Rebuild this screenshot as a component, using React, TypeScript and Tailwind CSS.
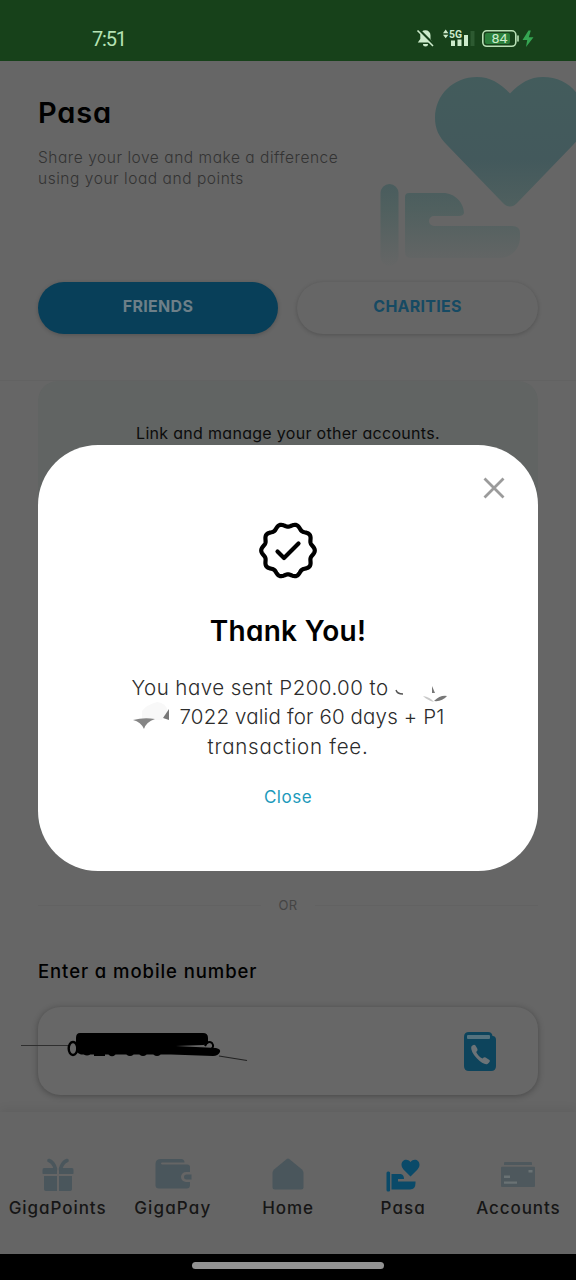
import React from "react";

function StatusBar() {
  return (
    <div className="h-[61px] bg-[#17411a] flex justify-between pl-[92px] pr-[40px]">
      <span className="mt-[27px] text-[20px] leading-[24px] tracking-[-1.2px] text-[#b5e2b4] font-['Roboto',sans-serif]">
        7:51
      </span>
      <svg width="120" height="24" viewBox="0 0 120 24" className="mt-[27px]">
        <path
          d="M9.5 3.2a5 5 0 0 1 5 5v4l2.2 3.3H1.8L4.3 12V8.2a5 5 0 0 1 5.2-5zM7 17h5a2.5 2.5 0 0 1-5 0z"
          fill="#cdebcb"
        />
        <path d="M2.5 2.5l16 16" stroke="#17411a" strokeWidth="3" />
        <path d="M1.5 3.5l15.5 15.5" stroke="#cdebcb" strokeWidth="1.6" />
        <path d="M27 6.2l2.7-3.6 2.7 3.6zM27 7.8l2.7 3.4 2.7-3.4z" fill="#cdebcb" />
        <text
          x="33"
          y="10.6"
          fontSize="11.5"
          fontWeight="700"
          textLength="13"
          lengthAdjust="spacingAndGlyphs"
          fontFamily="Roboto, sans-serif"
          fill="#cdebcb"
        >
          5G
        </text>
        <path d="M35 13.5h4v5.5h-4zM41.5 12.5h4v6.5h-4zM48 8h4v11h-4z" fill="#cdebcb" />
        <path d="M54.5 4h4v15h-4z" fill="#2d5a31" />
        <rect x="66.8" y="3.8" width="33" height="15.5" rx="4" fill="none" stroke="#b9dfb6" strokeWidth="1.6" />
        <rect x="69" y="6" width="25" height="11" rx="2" fill="#2b7f3b" />
        <path d="M102 9v5" stroke="#b9dfb6" strokeWidth="1.6" strokeLinecap="round" />
        <text
          x="75.5"
          y="16"
          fontSize="13"
          textLength="16"
          lengthAdjust="spacingAndGlyphs"
          fontFamily="Roboto, sans-serif"
          fill="#cdebcb"
        >
          84
        </text>
        <path d="M112.5 3.5l-6 9.5h4.7l-1.2 7 7.5-9.7h-4.7l2-6.8z" fill="#35a552" />
      </svg>
    </div>
  );
}

function HeartHand() {
  return (
    <svg width="206" height="200" viewBox="0 0 206 200" className="absolute right-0 top-[9px]">
      <defs>
        <linearGradient id="fade" gradientUnits="userSpaceOnUse" x1="0" y1="0" x2="0" y2="198">
          <stop offset="0" stopColor="#435c5c" />
          <stop offset="0.45" stopColor="#43595c" />
          <stop offset="0.7" stopColor="#50605f" />
          <stop offset="1" stopColor="#666666" />
        </linearGradient>
      </defs>
      <path
        fill="url(#fade)"
        d="M140 23.5C130 13 120 7 107 7C83 7 65 25 65 48C65 59 69 67 77 75L132 132Q140 141 148 132L203 75C211 67 215 59 215 48C215 25 197 7 173 7C160 7 150 13 140 23.5Z"
      />
      <rect x="10.5" y="114" width="18" height="82" rx="9" fill="url(#fade)" />
      <path
        fill="url(#fade)"
        d="M39 123H73C85 123 94 133 94 143Q93 146 89 146H64A5 5 0 0 0 64 156H142Q150 156 150 163V167C150 179 141 188 130 188H41Q35 188 35 182V127Q35 123 39 123Z"
      />
    </svg>
  );
}

function ContactBookIcon() {
  return (
    <svg width="32" height="39" viewBox="0 0 32 39">
      <path d="M5 0H24Q28 0 28.5 4Q32 4 32 8V34Q32 39 27 39H5Q0 39 0 34V5Q0 0 5 0Z" fill="#0d445c" />
      <rect x="3" y="3" width="23" height="4" rx="1" fill="#54727e" />
      <path
        d="M7.2 14.7Q9.8 11.5 11.5 13.5L13.5 17Q14 18.5 12.2 20Q14.5 24.8 18.5 26.6Q20.2 24.6 21.6 25.4L25.5 28Q26.8 29.5 23.5 32Q19.5 33.2 13 26.5T7.2 14.7Z"
        fill="#6c7377"
      />
    </svg>
  );
}

// crossed-out number inside the input
function Scribble() {
  return (
    <svg width="230" height="40" viewBox="0 0 230 40" className="absolute left-[-17px] top-[18px]">
      <path d="M0 20.5H48" stroke="#2f2f2f" strokeWidth="1" />
      <path d="M198 31L226 35.5" stroke="#222" strokeWidth="1.2" />
      <ellipse cx="52" cy="23.5" rx="4.3" ry="6.5" fill="none" stroke="#000" strokeWidth="2.4" />
      <path d="M184 21Q187 15 191 18Q194 22 189 25" fill="none" stroke="#000" strokeWidth="2" />
      <path
        d="M59 8H182Q187 8 187 13V17Q187 20 182 20L155 21L195 23Q200 24 199 27Q197 31 192 31L150 29.5H60Q55 28 55 24V13Q55 8 59 8Z"
        fill="#000"
      />
      <g fill="#000">
        <circle cx="66" cy="27" r="3.6" />
        <rect x="73" y="26" width="11" height="5" />
        <circle cx="91" cy="27" r="4.2" />
        <circle cx="109" cy="27" r="4" />
        <circle cx="122" cy="27" r="4" />
        <circle cx="136" cy="27" r="4" />
      </g>
    </svg>
  );
}

const navItems: { label: string; className: string; icon: React.ReactNode }[] = [
  {
    label: "GigaPoints",
    className: "tracking-[0.95px]",
    icon: (
      <g fill="#4a565c">
        <path d="M2 10H15V16H1Q.5 16 .5 15V12Q.5 10 2 10ZM17 10H30Q31.5 10 31.5 12V15Q31.5 16 31 16H17ZM2 18H15V33H4Q2 33 2 31ZM17 18H30V31Q30 33 28 33H17Z" />
        <path d="M7 2.5Q11.5 4 13.5 11M25 2.5Q20.5 4 18.5 11" fill="none" stroke="#4a565c" strokeWidth="3.6" strokeLinecap="round" />
      </g>
    ),
  },
  {
    label: "GigaPay",
    className: "tracking-[1.15px]",
    icon: (
      <g fill="#4a565c">
        <path d="M4 1H24Q27.5 1 27.5 4.5H5Q4 4.5 4 5.3T5 6.5H30Q33 6.5 33 9V14H29A5 5 0 0 0 29 24H33V27Q33 30.5 29.5 30.5H2Q-1.5 30.5-1.5 27V6Q-1.5 1 4 1Z" />
        <path d="M29.5 16.5H34.5V21.5H29.5A2.5 2.5 0 0 1 29.5 16.5Z" />
      </g>
    ),
  },
  {
    label: "Home",
    className: "tracking-[0.9px]",
    icon: (
      <path d="M14.5 1.2Q16 0 17.5 1.2L30 11.5Q31.5 13 31.5 15V29Q31.5 31.5 29 31.5H3Q.5 31.5.5 29V15Q.5 13 2 11.5Z" fill="#4a565c" />
    ),
  },
  {
    label: "Pasa",
    className: "tracking-[1.1px]",
    icon: (
      <g fill="#0a4a69">
        <path d="M23.5 4C20 0 14.5 2 14.5 7Q14.5 9.5 16.5 11.5L23.5 18.5L30.5 11.5Q32.5 9.5 32.5 7C32.5 2 27 0 23.5 4Z" />
        <rect x="-.5" y="13.5" width="3.6" height="20" rx="1.5" />
        <path d="M4.5 16H13.5Q17 16.5 17 21H11V23.5H28.5V25Q28.5 31.5 23 31.5H4.5Z" />
      </g>
    ),
  },
  {
    label: "Accounts",
    className: "tracking-[0.9px]",
    icon: (
      <g>
        <path d="M3 4H29Q30 4 30 5V7H2V5Q2 4 3 4ZM0 8.8H32Q33 8.8 33 10V28Q33 29 32 29H0Q-1 29-1 28V10Q-1 8.8 0 8.8Z" fill="#4e585d" />
        <path d="M2 17.5H8V20H2ZM2 23.5H15V25.8H2ZM26.5 12H30.5V14.5H26.5Z" fill="#6a7274" />
      </g>
    ),
  },
];

function BottomNav() {
  return (
    <nav className="h-[142px] grid grid-cols-5 pt-[44px] bg-[#656565] shadow-[0_-2px_10px_rgba(0,0,0,0.08)]">
      {navItems.map((item) => (
        <div key={item.label} className="flex flex-col items-center">
          <svg width="32" height="36" viewBox="0 0 32 36" className="overflow-visible mt-[2px]">
            {item.icon}
          </svg>
          <span className={`mt-[2px] text-[17px] leading-[24px] font-medium text-[#161616] whitespace-nowrap ${item.className}`}>
            {item.label}
          </span>
        </div>
      ))}
    </nav>
  );
}

function SealCheck() {
  const points: string[] = [];
  for (let i = 0; i <= 144; i++) {
    const angle = (i / 144) * Math.PI * 2;
    const r = 25.3 + 1.5 * Math.cos(10 * angle);
    points.push(`${(30 + r * Math.cos(angle)).toFixed(2)},${(30.5 + r * Math.sin(angle)).toFixed(2)}`);
  }
  return (
    <svg width="60" height="60" viewBox="0 0 60 60" className="mt-[75px]">
      <polygon points={points.join(" ")} fill="none" stroke="#000" strokeWidth="4.2" strokeLinejoin="round" />
      <path d="M19.5 31.5L26 38L40.5 23.5" fill="none" stroke="#000" strokeWidth="4.2" strokeLinecap="round" strokeLinejoin="round" />
    </svg>
  );
}

function ThankYouModal() {
  return (
    <div className="absolute left-[38px] top-[445px] w-[500px] h-[426px] rounded-[60px] bg-white flex flex-col items-center">
      <svg width="22" height="22" viewBox="0 0 22 22" className="absolute right-[33px] top-[32px]">
        <path d="M1.5 1.5L20.5 20.5M20.5 1.5L1.5 20.5" stroke="#9b9b9b" strokeWidth="2.8" />
      </svg>
      <SealCheck />
      <h2 className="mt-[35px] text-[28px] leading-[32px] font-semibold tracking-[0.3px] text-black">Thank You!</h2>
      <div className="relative mt-[26px] w-[313px] text-[20.5px] leading-[29.3px] font-light text-[#2c2c2c] whitespace-nowrap">
        <p className="tracking-[0.45px]">You have sent P200.00 to</p>
        <p className="text-right tracking-[0.15px]">7022 valid for 60 days + P1</p>
        <p className="text-center tracking-[0.75px]">transaction fee.</p>
        <svg width="330" height="60" viewBox="0 0 330 60" className="absolute left-0 top-0">
          <path d="M264 17Q265 21 271 21" fill="none" stroke="#555" strokeWidth="1.4" />
          <path d="M300 13L303 20H300Z" fill="#777" />
          <path d="M291 23Q298 24 302 29Q295 27 291 23Z" fill="#c9c9c9" />
          <path d="M302 28Q308 22 315 23Q310 29 302 28Z" fill="#777" />
          <path d="M10 38Q14 32 25 29Q34 30 36 38L30 47H10Z" fill="#f8f8f8" />
          <path d="M1 47Q12 44 23 46Q14 49 12 56Q9 49 1 47Z" fill="#858585" />
          <path d="M37 36V47L31 45Z" fill="#777" />
        </svg>
      </div>
      <button className="mt-[24px] text-[17px] leading-[24px] tracking-[0.5px] text-[#1c9abb]">Close</button>
    </div>
  );
}

export default function App() {
  return (
    <div className="relative w-[576px] h-[1280px] overflow-hidden bg-[#666666] flex flex-col font-['Inter',sans-serif] [font-feature-settings:'cv11']">
      <StatusBar />
      <header className="relative h-[320px] px-[38px] border-b border-[#626262]">
        <HeartHand />
        <h1 className="pt-[34px] text-[29px] leading-[36px] font-semibold tracking-[0.8px] text-black">Pasa</h1>
        <p className="mt-[16px] text-[15.5px] leading-[21.3px] font-light tracking-[0.54px] text-[#333333] whitespace-nowrap">
          Share your love and make a difference
          <br />
          using your load and points
        </p>
        <div className="mt-[92px] flex gap-[19px]">
          <button className="w-[240px] h-[52px] pb-[3px] rounded-full bg-[#083f59] text-[#6d7f88] text-[16px] font-bold tracking-[0.3px] shadow-[0_1px_4px_rgba(0,0,0,0.2)]">
            FRIENDS
          </button>
          <button className="w-[241px] h-[52px] pb-[3px] rounded-full bg-[#666666] text-[#164a63] text-[16px] font-bold tracking-[0.25px] shadow-[0_1px_4px_rgba(0,0,0,0.2)]">
            CHARITIES
          </button>
        </div>
      </header>
      <main className="h-[731px] px-[38px]">
        <div className="h-[460px] rounded-[20px] bg-[#616463] pt-[40px] text-center text-[16px] leading-[24px] tracking-[0.3px] text-[#0c0c0c]">
          Link and manage your other accounts.
        </div>
        <div className="mt-[54px] flex items-center gap-[18px] text-[13px] leading-[20px] tracking-[0.3px] text-[#444444]">
          <span className="h-px flex-1 bg-[#626262]" />
          OR
          <span className="h-px flex-1 bg-[#626262]" />
        </div>
        <h3 className="mt-[44px] text-[18.5px] leading-[24px] font-medium tracking-[0.92px] text-black">
          Enter a mobile number
        </h3>
        <div className="relative mt-[24px] h-[88px] rounded-[22px] bg-[#676767] shadow-[0_1px_6px_rgba(0,0,0,0.3)] flex items-center justify-end pr-[42px]">
          <Scribble />
          <ContactBookIcon />
        </div>
      </main>
      <BottomNav />
      <div className="h-[26px] bg-black flex justify-center pt-[8px]">
        <div className="w-[192px] h-[7px] rounded-full bg-[#929292]" />
      </div>
      <ThankYouModal />
    </div>
  );
}
